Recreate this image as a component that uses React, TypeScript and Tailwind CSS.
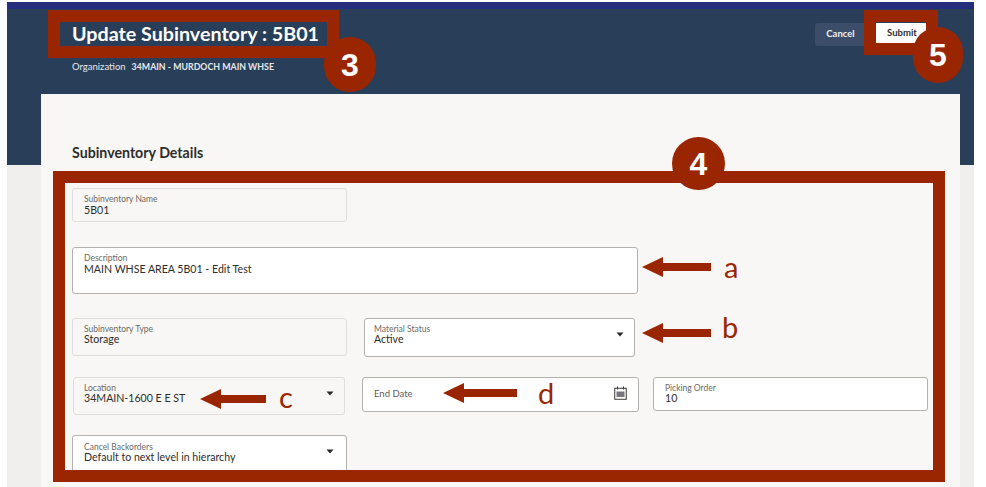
import React from "react";

const RED = "#992600";

function Field({ label, value, className, disabled, caret, loose, inset = "pl-[11px] pt-[5px]", children }: {
  label?: string;
  value?: string;
  className: string;
  disabled?: boolean;
  caret?: string;
  loose?: boolean;
  inset?: string;
  children?: React.ReactNode;
}) {
  return (
    <div
      className={`relative rounded-[3px] border ${inset} ${
        disabled ? "border-[#e0dedb] bg-[#f8f7f5]" : "border-[#b4b2af] bg-white"
      } ${className}`}
    >
      {label && <div className="text-[8.5px] leading-[10px] text-[#6b6967]">{label}</div>}
      {value && (
        <div className={`text-[10.6px] text-[#2f2d2b] ${loose ? "leading-[13px]" : "leading-[11px]"}`}>{value}</div>
      )}
      {caret && (
        <svg className={`absolute top-[13px] ${caret}`} width="8" height="5" viewBox="0 0 8 5">
          <path d="M0.5 0.5h7L4 4.5z" fill="#2a2826" />
        </svg>
      )}
      {children}
    </div>
  );
}

function Callout({ c, width, className, letterClass }: {
  c: string;
  width: number;
  className: string;
  letterClass?: string;
}) {
  return (
    <div className={`absolute flex items-center ${className}`}>
      <svg width={width} height="22" viewBox={`0 0 ${width} 22`}>
        <path d={`M0 11L21 1V7H${width}V15H21V21Z`} fill={RED} />
      </svg>
      <span className={`text-[29px] leading-[32px] text-[#992600] ${letterClass ?? ""}`}>{c}</span>
    </div>
  );
}

function Badge({ n, className }: { n: string; className: string }) {
  return (
    <div
      className={`absolute flex items-center justify-center rounded-full bg-[#992600] font-['Liberation_Sans',sans-serif] text-[32px] font-bold text-white ${className}`}
    >
      {n}
    </div>
  );
}

export default function App() {
  return (
    <div className="relative h-[487px] w-[986px] overflow-hidden bg-white pl-[7px] pt-[2px] font-['Lato',sans-serif]">
      <div className="w-[967px]">
        <div className="h-[7px] bg-[#252e7c]" />

        {/* Page header */}
        <div className="flex h-[156px] items-start justify-between bg-[#293e58] pl-[65px] pr-[48px]">
          <div className="pt-[13px]">
            <h1 className="text-[19.7px] leading-[24px] font-bold text-white">Update Subinventory : 5B01</h1>
            <div className="mt-[15px] flex items-center gap-[6px] text-[9.5px] leading-[12px] text-[#e6e8eb]">
              <span>Organization</span>
              <span className="text-[8.8px] font-bold">34MAIN - MURDOCH MAIN WHSE</span>
            </div>
          </div>
          <div className="flex pt-[14px] text-[9.5px] font-bold">
            <button className="h-[23px] w-[51px] rounded-[3px] bg-[#3b4d68] text-[#eef0f2]">Cancel</button>
            <button className="ml-[10px] h-[21px] w-[50px] bg-white pl-[2px] text-[#2f2d2b]">Submit</button>
          </div>
        </div>

        <div className="flow-root h-[322px] bg-[#f0efed] px-[34px]">
          {/* Card */}
          <div className="-mt-[71px] h-[393px] w-[919px] bg-[#f9f7f5] pl-[31px] pt-[51px]">
            <h2 className="text-[14.2px] leading-[16px] font-bold text-[#2f2d2b]">Subinventory Details</h2>

            <Field className="mt-[27px] h-[34px] w-[275px]" label="Subinventory Name" value="5B01" disabled loose />
            <Field className="mt-[25px] h-[47px] w-[566px] border-[#9c9a97]" label="Description" value="MAIN WHSE AREA 5B01 - Edit Test" loose />

            <div className="mt-[24px] flex gap-[17px]">
              <Field className="h-[38px] w-[275px]" label="Subinventory Type" value="Storage" disabled />
              <Field className="h-[39px] w-[271px]" inset="pl-[9px] pt-[5px]" label="Material Status" value="Active" caret="right-[10px]" />
            </div>

            <div className="mt-[20px] flex items-start">
              <Field className="ml-[1px] h-[38px] w-[272px]" inset="pl-[10px] pt-[5px]" label="Location" value="34MAIN-1600 E E ST" disabled caret="right-[10px]" />
              <Field className="ml-[17px] h-[35px] w-[277px]">
                <div className="mt-[5px] text-[9.5px] leading-[12px] text-[#5e5c5a]">End Date</div>
                <svg className="absolute right-[11px] top-[8px]" width="13" height="14" viewBox="0 0 13 14" fill="none">
                  <path d="M3.5 0.5v3M9.5 0.5v3" stroke="#3a3836" />
                  <rect x="0.75" y="2.25" width="11.5" height="11" stroke="#3a3836" />
                  <rect x="2.5" y="5.5" width="8" height="5.5" fill="#77757a" />
                </svg>
              </Field>
              <Field className="ml-[14px] h-[34px] w-[275px]" label="Picking Order" value="10" />
            </div>

            <Field className="mt-[20px] h-[38px] w-[275px] border-[#a9a7a4]" inset="pl-[11px] pt-[6px]" label="Cancel Backorders" value="Default to next level in hierarchy" caret="right-[12px]" />
          </div>
        </div>
      </div>

      {/* Callout overlays */}
      <div className="absolute left-[48px] top-[10px] h-[48px] w-[291px] border-[12px] border-[#992600]" />
      <div className="absolute left-[864px] top-[10px] h-[45px] w-[74px] border-[12px] border-[#992600]" />
      <div className="absolute left-[53px] top-[171px] h-[311px] w-[892px] border-[12px] border-[#992600]" />
      <Badge n="3" className="left-[324px] top-[37px] h-[55px] w-[52px]" />
      <Badge n="5" className="left-[913px] top-[27px] h-[56px] w-[50px]" />
      <Badge n="4" className="left-[672px] top-[137px] h-[53px] w-[53px]" />

      <Callout c="a" width={69} className="left-[642px] top-[251px] gap-[13px]" />
      <Callout c="b" width={69} className="left-[642px] top-[311px] gap-[11px]" letterClass="mb-[12px]" />
      <Callout c="c" width={66} className="left-[200px] top-[381px] gap-[13px]" letterClass="mb-[4px]" />
      <Callout c="d" width={74} className="left-[443px] top-[377px] gap-[21px]" />
    </div>
  );
}
